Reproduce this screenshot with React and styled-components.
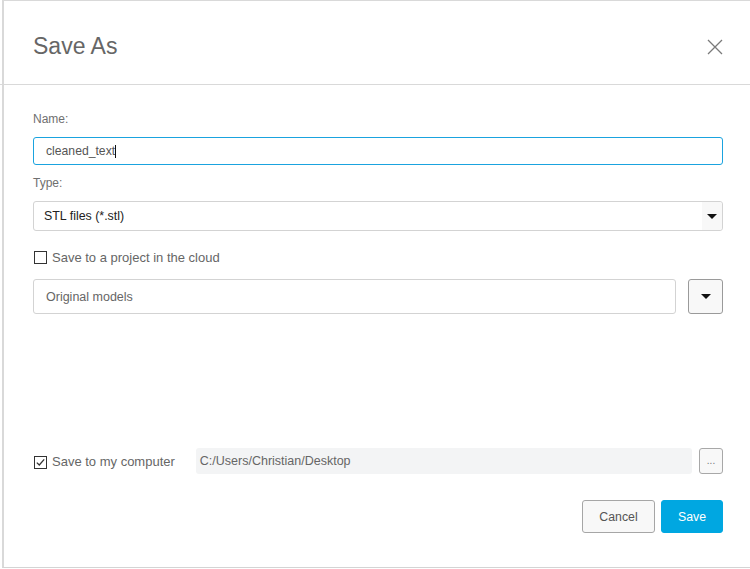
import React from 'react';
import styled, {createGlobalStyle} from 'styled-components';

const GlobalStyle = createGlobalStyle`
  html, body {
    margin: 0;
    padding: 0;
    background: #ffffff;
  }
  body {
    font-family: "Liberation Sans", Arial, sans-serif;
    color: #666;
    overflow: hidden;
  }
`;

const Dialog = styled.div`
  margin-left: 2px;
  width: 748px;
  height: 568px;
  box-sizing: border-box;
  border-left: 2px solid #d9d9d9;
  border-top: 1px solid #d9d9d9;
  border-bottom: 1px solid #d4d4d4;
  display: flex;
  flex-direction: column;
  background: #fff;
`;

const Header = styled.header`
  height: 84px;
  box-sizing: border-box;
  margin-left: -4px;
  padding: 31px 27px 0 33px;
  border-bottom: 1px solid #d9d9d9;
  display: flex;
  align-items: flex-start;
  justify-content: space-between;
`;

const Title = styled.h1`
  margin: 0;
  font-size: 23px;
  line-height: 28px;
  font-weight: normal;
  color: #666;
`;

const CloseButton = styled.button`
  border: 0;
  padding: 0;
  margin-top: 7px;
  background: none;
  width: 16px;
  height: 16px;
  display: block;
  cursor: pointer;
`;

const Body = styled.div`
  flex: 1;
  padding: 27px 27px 0 29px;
  display: flex;
  flex-direction: column;
`;

const Label = styled.div`
  font-size: 12px;
  line-height: 14px;
  color: #6f6f6f;
  margin-top: ${p => p.$top || 0}px;
`;

const TextBox = styled.div`
  margin-top: 11px;
  height: 28px;
  box-sizing: border-box;
  border: 1px solid #1aa3df;
  border-radius: 3px;
  padding: 0 12px;
  display: flex;
  align-items: center;
  font-size: 12.2px;
  color: #555;
`;

const Caret = styled.span`
  display: inline-block;
  width: 1px;
  height: 13px;
  background: #111;
  margin-left: 0;
`;

const Select = styled.div`
  margin-top: 11px;
  height: 30px;
  box-sizing: border-box;
  border: 1px solid #d3d3d3;
  border-radius: 3px;
  display: flex;
  align-items: stretch;
  font-size: 12.4px;
  color: #222;
`;

const SelectValue = styled.div`
  flex: 1;
  display: flex;
  align-items: center;
  padding-left: 10px;
`;

const SelectArrow = styled.div`
  width: 20px;
  background: #f8f8f8;
  display: flex;
  align-items: center;
  justify-content: center;
  border-radius: 0 3px 3px 0;
`;

const Triangle = styled.span`
  width: 0;
  height: 0;
  border-left: 5px solid transparent;
  border-right: 5px solid transparent;
  border-top: 5px solid #111;
`;

const CheckRow = styled.label`
  display: flex;
  align-items: center;
  gap: 5px;
  margin-top: ${p => p.$top || 0}px;
  height: ${p => p.$height || 17}px;
  font-size: 13px;
  color: #666;
  white-space: nowrap;
`;

const Box = styled.span`
  width: 13px;
  height: 13px;
  box-sizing: border-box;
  border: 1px solid #333;
  margin-left: 1px;
  background: #fff;
  display: flex;
  align-items: center;
  justify-content: center;
  flex-shrink: 0;
  margin-top: ${p => p.$offset || 0}px;
`;

const ProjectRow = styled.div`
  margin-top: 13px;
  display: flex;
  gap: 12px;
`;

const ProjectField = styled.div`
  flex: 1;
  height: 35px;
  box-sizing: border-box;
  border: 1px solid #d3d3d3;
  border-radius: 3px;
  padding-left: 12px;
  display: flex;
  align-items: center;
  font-size: 12.5px;
  color: #666;
`;

const DropButton = styled.button`
  width: 35px;
  height: 35px;
  box-sizing: border-box;
  border: 1px solid #9a9a9a;
  border-radius: 3px;
  background: #f8f8f8;
  display: flex;
  align-items: center;
  justify-content: center;
  padding: 0;
`;

const ComputerRow = styled.div`
  margin-top: 134px;
  height: 26px;
  display: flex;
  align-items: center;
`;

const PathField = styled.div`
  margin-left: 21px;
  flex: 1;
  height: 26px;
  box-sizing: border-box;
  background: #f3f4f5;
  border-radius: 3px;
  padding-left: 4px;
  display: flex;
  align-items: center;
  font-size: 12.5px;
  color: #666;
`;

const BrowseButton = styled.button`
  margin-left: 7px;
  width: 24px;
  height: 26px;
  box-sizing: border-box;
  border: 1px solid #a8a8a8;
  border-radius: 3px;
  background: #f8f8f8;
  font-family: inherit;
  font-size: 10px;
  color: #777;
  padding: 0 0 2px;
  display: flex;
  align-items: center;
  justify-content: center;
`;

const Footer = styled.div`
  margin-top: 26px;
  display: flex;
  justify-content: flex-end;
  gap: 6px;
`;

const Button = styled.button`
  height: 33px;
  width: ${p => p.$width}px;
  box-sizing: border-box;
  border-radius: 3px;
  font-family: inherit;
  font-size: 12.3px;
  padding: 0;
  border: 1px solid ${p => (p.$primary ? '#00a7e1' : '#a6a6a6')};
  background: ${p => (p.$primary ? '#00a7e1' : '#f8f8f8')};
  color: ${p => (p.$primary ? '#fff' : '#555')};
`;

const CloseIcon = () => (
  <svg width="16" height="16" viewBox="0 0 16 16">
    <path d="M1 1 L15 15 M15 1 L1 15" stroke="#7a7a7a" strokeWidth="1.3" fill="none" />
  </svg>
);

const CheckMark = () => (
  <svg width="11" height="11" viewBox="0 0 11 11">
    <path d="M1.8 5.6 L4.3 8 L9.2 2.4" stroke="#333" strokeWidth="1.3" fill="none" />
  </svg>
);

export default function App () {
  return (
    <>
      <GlobalStyle />
      <Dialog>
        <Header>
          <Title>Save As</Title>
          <CloseButton aria-label="Close"><CloseIcon /></CloseButton>
        </Header>
        <Body>
          <Label>Name:</Label>
          <TextBox>cleaned_text<Caret /></TextBox>
          <Label $top={11}>Type:</Label>
          <Select>
            <SelectValue>STL files (*.stl)</SelectValue>
            <SelectArrow><Triangle /></SelectArrow>
          </Select>
          <CheckRow $top={18}>
            <Box />
            Save to a project in the cloud
          </CheckRow>
          <ProjectRow>
            <ProjectField>Original models</ProjectField>
            <DropButton><Triangle /></DropButton>
          </ProjectRow>
          <ComputerRow>
            <CheckRow $height={26}>
              <Box $offset={2}><CheckMark /></Box>
              Save to my computer
            </CheckRow>
            <PathField>C:/Users/Christian/Desktop</PathField>
            <BrowseButton>...</BrowseButton>
          </ComputerRow>
          <Footer>
            <Button $width={73}>Cancel</Button>
            <Button $width={62} $primary>Save</Button>
          </Footer>
        </Body>
      </Dialog>
    </>
  );
}
